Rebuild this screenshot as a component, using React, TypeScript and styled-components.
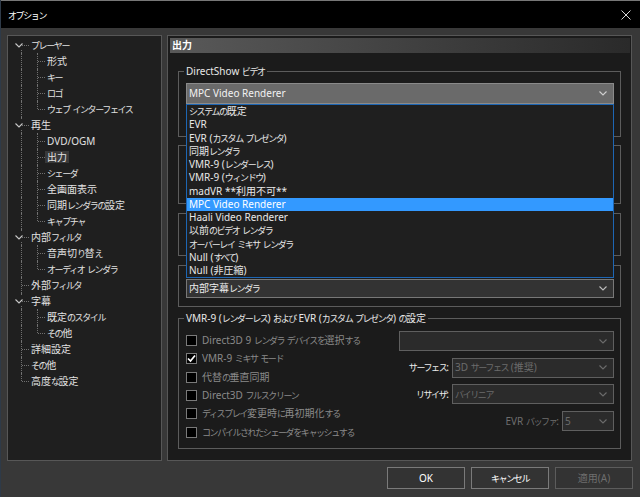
import * as React from 'react'
import styled, { createGlobalStyle, css } from 'styled-components'

const GlobalStyle = createGlobalStyle`
  * { box-sizing: border-box; }
  html, body { margin: 0; padding: 0; background: #383838; }
  body {
    font-family: 'Noto Sans', 'Noto Sans CJK JP', sans-serif;
    font-size: 10px;
    line-height: 13px;
    color: #e8e8e8;
  }
`

// kana in the original UI font are much narrower than in Noto Sans CJK
const Kana = styled.span`
  font-size: 9px;
  letter-spacing: -1.4px;
`

const kanaRun = /([\u3040-\u30ff\u31f0-\u31ff]+)/

const JText: React.FC<{ children: string }> = ({ children }) => (
  <>
    {children
      .split(kanaRun)
      .map((part, i) => (i % 2 === 1 ? <Kana key={i}>{part}</Kana> : part))}
  </>
)

// Window frame
const Window = styled.div`
  width: 640px;
  height: 497px;
  display: flex;
  flex-direction: column;
  background: #383838;
  border-left: 1px solid #2e3a48;
  overflow: hidden;
`

const TitleBar = styled.div`
  flex: none;
  height: 28px;
  display: flex;
  align-items: center;
  justify-content: space-between;
  padding: 0 9px 0 7px;
  background: #000;
  border-top: 1px solid #777;
  color: #fff;
  font-size: 11px;
`

const Body = styled.div`
  flex: none;
  padding: 7px 8px 0 6px;
`

const Panes = styled.div`
  display: flex;
  gap: 5px;
  height: 426px;
`

// Tree
const TreePane = styled.div`
  flex: none;
  width: 155px;
  border: 1px solid #575757;
  background: #1f1f1f;
  padding-top: 1px;
`

const TreeRow = styled.div`
  height: 16px;
  display: flex;
  align-items: center;
`

const dotted = '1px dotted #707070'

const RootCell = styled.div<{ $top: boolean; $bottom: boolean; $branch: boolean }>`
  position: relative;
  flex: none;
  width: 21px;
  height: 100%;

  &::before {
    content: '';
    position: absolute;
    left: 13px;
    top: ${p => (p.$top ? '0' : '50%')};
    bottom: ${p => (p.$bottom ? '0' : '50%')};
    border-left: ${dotted};
  }

  ${p =>
    p.$branch &&
    css`
      &::after {
        content: '';
        position: absolute;
        left: 14px;
        width: 7px;
        top: 50%;
        border-top: ${dotted};
      }
    `}
`

const ChildCell = styled.div<{ $last: boolean }>`
  position: relative;
  flex: none;
  width: 16px;
  height: 100%;

  &::before {
    content: '';
    position: absolute;
    left: 8px;
    top: 0;
    bottom: ${p => (p.$last ? '50%' : '0')};
    border-left: ${dotted};
  }

  &::after {
    content: '';
    position: absolute;
    left: 9px;
    width: 7px;
    top: 50%;
    border-top: ${dotted};
  }
`

const Expander = styled.span`
  position: absolute;
  left: 5px;
  top: 3px;
  width: 12px;
  height: 10px;
  display: flex;
  align-items: center;
  justify-content: center;
  background: #1f1f1f;
`

const TreeLabel = styled.span<{ $selected?: boolean }>`
  height: 12px;
  line-height: 12px;
  padding: 0 2px;
  white-space: nowrap;
  color: #e2e2e2;
  background: ${p => (p.$selected ? '#393939' : 'transparent')};
`

// Page
const PagePane = styled.div`
  flex: 1;
  border: 1px solid #575757;
  background: #1b1b1b;
  display: flex;
  flex-direction: column;
`

const PageHeading = styled.div`
  margin: 2px 1px 0 2px;
  height: 15px;
  line-height: 15px;
  padding-left: 2px;
  background: linear-gradient(to right, #595959, #2a2a2a);
  font-weight: bold;
  color: #fff;
`

const Groups = styled.div`
  display: flex;
  flex-direction: column;
  margin-top: 18px;
  padding: 0 10px;
`

const GroupBox = styled.div<{ $h: number; $mt?: number }>`
  flex: none;
  height: ${p => p.$h}px;
  margin-top: ${p => p.$mt ?? 0}px;
  border: 1px solid #5c5c5c;
  padding: 0 6px 0 7px;
  display: flex;
  flex-direction: column;
`

const Caption = styled.div`
  align-self: flex-start;
  height: 13px;
  margin: -7px 0 0 -2px;
  padding: 0 2px;
  background: #1b1b1b;
  color: #e8e8e8;
  white-space: nowrap;
`

type ComboKind = 'open' | 'normal' | 'disabled'

const comboColors: Record<ComboKind, { bg: string; border: string; text: string }> = {
  open: { bg: '#6a6a6a', border: '#8a8a8a', text: '#f2f2f2' },
  normal: { bg: '#333333', border: '#787878', text: '#ececec' },
  disabled: { bg: '#2b2b2b', border: '#5f5f5f', text: '#6c6c6c' }
}

const ComboBox = styled.div<{ $kind: ComboKind; $w?: number; $h?: number; $mt?: number }>`
  flex: none;
  width: ${p => (p.$w ? `${p.$w}px` : 'auto')};
  height: ${p => p.$h ?? 20}px;
  margin-top: ${p => p.$mt ?? 0}px;
  display: flex;
  align-items: center;
  justify-content: space-between;
  padding: 0 6px 0 2px;
  border: 1px solid ${p => comboColors[p.$kind].border};
  background: ${p => comboColors[p.$kind].bg};
  color: ${p => comboColors[p.$kind].text};
  white-space: nowrap;
`

const ComboWrap = styled.div`
  position: relative;
  margin-top: 5px;
`

const DropList = styled.div`
  position: absolute;
  top: 100%;
  left: 0;
  right: 0;
  height: 174px;
  z-index: 5;
  border: 1px solid #1d66b4;
  background: #1f1f1f;
  display: flex;
  flex-direction: column;
`

const ListItem = styled.div<{ $selected?: boolean }>`
  height: 13.25px;
  line-height: 13.25px;
  padding-left: 2px;
  white-space: nowrap;
  color: ${p => (p.$selected ? '#fff' : '#e8e8e8')};
  background: ${p => (p.$selected ? '#3399ff' : 'transparent')};
`

const VmrBody = styled.div`
  display: flex;
  justify-content: space-between;
`

const CheckList = styled.div`
  display: flex;
  flex-direction: column;
  margin-top: 6.5px;
`

const CheckRow = styled.div`
  height: 18.3px;
  display: flex;
  align-items: center;
  gap: 5px;
  color: #8a8a8a;
  white-space: nowrap;
`

const CheckBox = styled.span`
  flex: none;
  width: 11px;
  height: 11px;
  border: 1px solid #7a7a7a;
  background: #000;
  display: flex;
  align-items: center;
  justify-content: center;
`

const OptionColumn = styled.div`
  width: 215px;
  display: flex;
  flex-direction: column;
  gap: 6.7px;
  margin-top: 6px;
`

const OptionRow = styled.div`
  display: flex;
  justify-content: flex-end;
  align-items: center;
  gap: 3px;
`

const OptionLabel = styled.span<{ $disabled?: boolean }>`
  white-space: nowrap;
  color: ${p => (p.$disabled ? '#6e6e6e' : '#ececec')};
`

// Buttons
const Footer = styled.div`
  flex: 1;
  display: flex;
  justify-content: flex-end;
  align-items: flex-start;
  gap: 6px;
  padding: 6px 7px 0 0;
`

const Button = styled.div<{ $disabled?: boolean }>`
  width: 78px;
  height: 22px;
  display: flex;
  align-items: center;
  justify-content: center;
  background: #333;
  border: 1px solid ${p => (p.$disabled ? '#5c5c5c' : '#7a7a7a')};
  color: ${p => (p.$disabled ? '#6e6e6e' : '#fff')};
`

const CloseIcon = () => (
  <svg width="10" height="10" viewBox="0 0 10 10">
    <path d="M0.5 0.5 L9.5 9.5 M9.5 0.5 L0.5 9.5" stroke="#d8d8d8" strokeWidth="1" fill="none" />
  </svg>
)

const Chevron = ({ color = '#bdbdbd' }: { color?: string }) => (
  <svg width="8" height="5" viewBox="0 0 8 5">
    <polyline points="0.5,0.5 4,4 7.5,0.5" fill="none" stroke={color} strokeWidth="1.1" />
  </svg>
)

const CheckMark = () => (
  <svg width="9" height="9" viewBox="0 0 9 9">
    <polyline points="1,4.5 3.5,7 8,1.5" fill="none" stroke="#fff" strokeWidth="1.7" />
  </svg>
)

// Data
interface TreeNode {
  label: string
  children?: string[]
}

const tree: TreeNode[] = [
  { label: 'プレーヤー', children: ['形式', 'キー', 'ロゴ', 'ウェブ インターフェイス'] },
  {
    label: '再生',
    children: ['DVD/OGM', '出力', 'シェーダ', '全画面表示', '同期レンダラの設定', 'キャプチャ']
  },
  { label: '内部フィルタ', children: ['音声切り替え', 'オーディオ レンダラ'] },
  { label: '外部フィルタ' },
  { label: '字幕', children: ['既定のスタイル', 'その他'] },
  { label: '詳細設定' },
  { label: 'その他' },
  { label: '高度な設定' }
]

const selectedPage = '出力'

const renderers = [
  'システムの既定',
  'EVR',
  'EVR (カスタム プレゼンタ)',
  '同期レンダラ',
  'VMR-9 (レンダーレス)',
  'VMR-9 (ウィンドウ)',
  'madVR **利用不可**',
  'MPC Video Renderer',
  'Haali Video Renderer',
  '以前のビデオ レンダラ',
  'オーバーレイ ミキサ レンダラ',
  'Null (すべて)',
  'Null (非圧縮)'
]

const checks = [
  { label: 'Direct3D 9 レンダラ デバイスを選択する', checked: false },
  { label: 'VMR-9 ミキサ モード', checked: true },
  { label: '代替の垂直同期', checked: false },
  { label: 'Direct3D フルスクリーン', checked: false },
  { label: 'ディスプレイ変更時に再初期化する', checked: false },
  { label: 'コンパイルされたシェーダをキャッシュする', checked: false }
]

const OptionsTree: React.FC = () => (
  <TreePane>
    {tree.map((node, i) => {
      const first = i === 0
      const last = i === tree.length - 1
      const kids = node.children ?? []
      return (
        <React.Fragment key={node.label + i}>
          <TreeRow>
            <RootCell $top={!first} $bottom={!last} $branch>
              {kids.length > 0 && (
                <Expander>
                  <Chevron color="#c8c8c8" />
                </Expander>
              )}
            </RootCell>
            <TreeLabel $selected={node.label === selectedPage}>
              <JText>{node.label}</JText>
            </TreeLabel>
          </TreeRow>
          {kids.map((child, j) => (
            <TreeRow key={child}>
              <RootCell $top $bottom={!last} $branch={false} />
              <ChildCell $last={j === kids.length - 1} />
              <TreeLabel $selected={child === selectedPage}>
                <JText>{child}</JText>
              </TreeLabel>
            </TreeRow>
          ))}
        </React.Fragment>
      )
    })}
  </TreePane>
)

const App: React.FC = () => {
  return (
    <Window>
      <GlobalStyle />
      <TitleBar>
        <span>
          <JText>オプション</JText>
        </span>
        <CloseIcon />
      </TitleBar>

      <Body>
        <Panes>
          <OptionsTree />

          <PagePane>
            <PageHeading>出力</PageHeading>
            <Groups>
              <GroupBox $h={66}>
                <Caption>
                  <JText>DirectShow ビデオ</JText>
                </Caption>
                <ComboWrap>
                  <ComboBox $kind="open" $h={21}>
                    <span>MPC Video Renderer</span>
                    <Chevron color="#d0d0d0" />
                  </ComboBox>
                  <DropList>
                    {renderers.map(r => (
                      <ListItem key={r} $selected={r === 'MPC Video Renderer'}>
                        <JText>{r}</JText>
                      </ListItem>
                    ))}
                  </DropList>
                </ComboWrap>
              </GroupBox>

              {/* these groups sit under the open list; only their frames show */}
              <GroupBox $h={59} $mt={8} />
              <GroupBox $h={43} $mt={9} />

              <GroupBox $h={42} $mt={9}>
                <ComboBox $kind="normal" $h={19} $mt={13}>
                  <span>
                    <JText>内部字幕レンダラ</JText>
                  </span>
                  <Chevron />
                </ComboBox>
              </GroupBox>

              <GroupBox $h={131} $mt={11}>
                <Caption>
                  <JText>VMR-9 (レンダーレス) および EVR (カスタム プレゼンタ) の設定</JText>
                </Caption>
                <VmrBody>
                  <CheckList>
                    {checks.map(c => (
                      <CheckRow key={c.label}>
                        <CheckBox>{c.checked && <CheckMark />}</CheckBox>
                        <span>
                          <JText>{c.label}</JText>
                        </span>
                      </CheckRow>
                    ))}
                  </CheckList>

                  <OptionColumn>
                    <OptionRow>
                      <ComboBox $kind="disabled" $w={215}>
                        <span />
                        <Chevron color="#6c6c6c" />
                      </ComboBox>
                    </OptionRow>
                    <OptionRow>
                      <OptionLabel>
                        <JText>サーフェス:</JText>
                      </OptionLabel>
                      <ComboBox $kind="disabled" $w={162}>
                        <span>
                          <JText>3D サーフェス (推奨)</JText>
                        </span>
                        <Chevron color="#6c6c6c" />
                      </ComboBox>
                    </OptionRow>
                    <OptionRow>
                      <OptionLabel>
                        <JText>リサイザ:</JText>
                      </OptionLabel>
                      <ComboBox $kind="disabled" $w={162}>
                        <span>
                          <JText>バイリニア</JText>
                        </span>
                        <Chevron color="#6c6c6c" />
                      </ComboBox>
                    </OptionRow>
                    <OptionRow>
                      <OptionLabel $disabled>
                        <JText>EVR バッファ:</JText>
                      </OptionLabel>
                      <ComboBox $kind="disabled" $w={52}>
                        <span>5</span>
                        <Chevron color="#6c6c6c" />
                      </ComboBox>
                    </OptionRow>
                  </OptionColumn>
                </VmrBody>
              </GroupBox>
            </Groups>
          </PagePane>
        </Panes>
      </Body>

      <Footer>
        <Button>OK</Button>
        <Button>
          <JText>キャンセル</JText>
        </Button>
        <Button $disabled>適用(A)</Button>
      </Footer>
    </Window>
  )
}

export default App
